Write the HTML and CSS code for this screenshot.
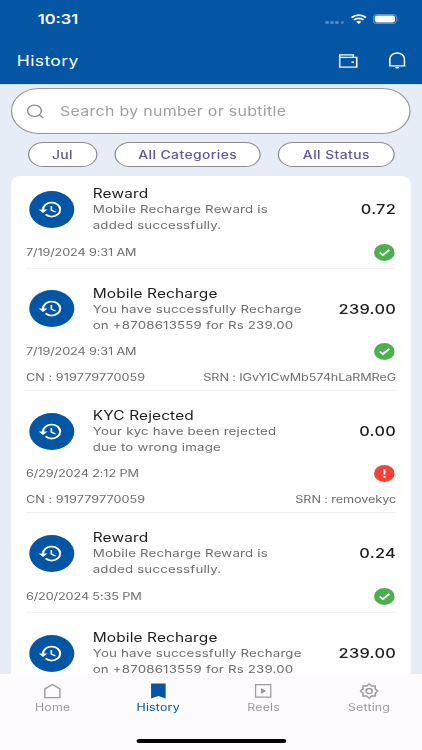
FILE: index.html
```html
<!DOCTYPE html>
<html lang="en">
<head>
<meta charset="utf-8">
<title>History</title>
<link rel="stylesheet" href="styles.css">
</head>
<body>
<svg width="0" height="0" class="defs">
  <symbol id="hist" viewBox="0 0 24 24"><path fill="#fff" d="M13 3a9 9 0 0 0-9 9H1l3.89 3.89.07.14L9 12H6c0-3.87 3.13-7 7-7s7 3.13 7 7-3.13 7-7 7c-1.93 0-3.68-.79-4.94-2.06l-1.42 1.42A8.954 8.954 0 0 0 13 21a9 9 0 0 0 0-18zm-1 5v5l4.28 2.54.72-1.21-3.5-2.08V8H12z"/></symbol>
  <symbol id="ok" viewBox="0 0 17 17"><circle cx="8.5" cy="8.5" r="8.5" fill="#4caf50"/><path d="M4.7 8.5l2.6 2.6 5.2-5.2" fill="none" stroke="#fff" stroke-width="1.7"/></symbol>
  <symbol id="bad" viewBox="0 0 17 17"><circle cx="8.5" cy="8.5" r="8.5" fill="#f44336"/><path d="M8.5 4.2v5.2M8.5 10.9v1.9" stroke="#fff" stroke-width="1.8"/></symbol>
</svg>
<div class="screen">
  <header>
    <div class="status">
      <span class="time">10:31</span>
      <span class="dots"><i></i><i></i><i></i><i></i></span>
      <svg class="wifi" width="13" height="10" viewBox="0 0 13 10"><g fill="none" stroke="#fff" stroke-width="1.7"><path d="M.6 3.6a8.4 8.4 0 0 1 11.8 0"/><path d="M2.6 5.9a5.5 5.5 0 0 1 7.8 0"/></g><path d="M6.5 10L4.4 7.8a3 3 0 0 1 4.2 0z" fill="#fff"/></svg>
      <svg class="battery" width="22" height="10" viewBox="0 0 22 10"><rect x=".4" y=".4" width="19" height="9.2" rx="3" fill="none" stroke="#fff" stroke-opacity=".45" stroke-width=".8"/><rect x="1.6" y="1.6" width="16.6" height="6.8" rx="1.8" fill="#fff"/><path d="M20.5 3.5q1.2 1.5 0 3z" fill="#fff" fill-opacity=".5"/></svg>
    </div>
    <div class="bar">
      <h1>History</h1>
      <svg class="wallet" width="16" height="14" viewBox="0 0 16 14" fill="none" stroke="#fff" stroke-width="1.3"><path d="M.8 3.4V.8H12v2.6"/><path d="M.8 3.4h14v9.8H.8z"/><path d="M10.5 8.2h2" stroke-width="1.6"/></svg>
      <svg class="bell" width="14" height="17" viewBox="0 0 14 17" fill="none" stroke="#fff" stroke-width="1.3"><path d="M0 13.8h14M1 13.8V7a6 6 0 0 1 12 0v6.8"/><path d="M5.2 15h3.6L7.8 16.4H6.2z" fill="#fff" stroke="none"/></svg>
    </div>
  </header>
  <div class="search">
    <svg width="14" height="15" viewBox="0 0 14 15" fill="none" stroke="#8c8c8f" stroke-width="1.2"><circle cx="6.3" cy="6.8" r="5.7"/><path d="M10.3 10.8l3.2 3.2"/></svg>
    <span>Search by number or subtitle</span>
  </div>
  <div class="chips">
    <span class="chip jul">Jul</span><span class="chip cat">All Categories</span><span class="chip stat">All Status</span>
  </div>
  <main class="card">
    <article>
      <div class="row"><span class="avatar"><svg width="21" height="21"><use href="#hist"/></svg></span>
        <div class="body"><h2>Reward</h2><p>Mobile Recharge Reward is<br>added successfully.</p></div><b>0.72</b></div>
      <div class="date"><span>7/19/2024 9:31 AM</span><svg width="17" height="17"><use href="#ok"/></svg></div>
    </article>
    <article>
      <div class="row"><span class="avatar"><svg width="21" height="21"><use href="#hist"/></svg></span>
        <div class="body"><h2>Mobile Recharge</h2><p>You have successfully Recharge<br>on +8708613559 for Rs 239.00</p></div><b>239.00</b></div>
      <div class="date"><span>7/19/2024 9:31 AM</span><svg width="17" height="17"><use href="#ok"/></svg></div>
      <div class="refs"><span>CN : 919779770059</span><span class="srn">SRN : IGvYICwMb574hLaRMReG</span></div>
    </article>
    <article>
      <div class="row"><span class="avatar"><svg width="21" height="21"><use href="#hist"/></svg></span>
        <div class="body"><h2>KYC Rejected</h2><p>Your kyc have been rejected<br>due to wrong image</p></div><b>0.00</b></div>
      <div class="date"><span>6/29/2024 2:12 PM</span><svg width="17" height="17"><use href="#bad"/></svg></div>
      <div class="refs"><span>CN : 919779770059</span><span class="srn">SRN : removekyc</span></div>
    </article>
    <article>
      <div class="row"><span class="avatar"><svg width="21" height="21"><use href="#hist"/></svg></span>
        <div class="body"><h2>Reward</h2><p>Mobile Recharge Reward is<br>added successfully.</p></div><b>0.24</b></div>
      <div class="date"><span>6/20/2024 5:35 PM</span><svg width="17" height="17"><use href="#ok"/></svg></div>
    </article>
    <article>
      <div class="row"><span class="avatar"><svg width="21" height="21"><use href="#hist"/></svg></span>
        <div class="body"><h2>Mobile Recharge</h2><p>You have successfully Recharge<br>on +8708613559 for Rs 239.00</p></div><b>239.00</b></div>
    </article>
  </main>
  <footer>
    <nav>
      <a><svg width="14" height="15" viewBox="0 0 14 15" fill="none" stroke="#9b9b9e" stroke-width="1.2"><path d="M.8 14.2V5.4L7 .9l6.2 4.5v8.8z"/></svg>Home</a>
      <a class="on"><svg width="14" height="15" viewBox="0 0 14 15"><path d="M1 0h12v15l-6-2.6L1 15z" fill="#0456a5"/></svg>History</a>
      <a><svg width="14" height="15" viewBox="0 0 14 15" fill="none" stroke="#9b9b9e" stroke-width="1.2"><path d="M.7 1.2h12.6v12.4H.7z"/><path d="M5.2 4.6v5.6l4.4-2.8z" fill="#9b9b9e" stroke="none"/></svg>Reels</a>
      <a><svg width="16" height="16" viewBox="0 0 16 16" fill="none" stroke="#9b9b9e" stroke-width="1.3"><path d="M8 .9l2 2.1h3v3l2.1 2-2.1 2v3h-3L8 15.1 6 13H3v-3L.9 8 3 6V3h3z"/><circle cx="8" cy="8" r="2.5"/></svg>Setting</a>
    </nav>
    <div class="home"></div>
  </footer>
</div>
</body>
</html>
```
FILE: styles.css
```css
* { box-sizing: border-box; margin: 0; padding: 0; }
html, body { width: 422px; height: 750px; overflow: hidden; background: #e6edf6; }
body { font-family: Inter, "Liberation Sans", sans-serif; }
.defs { position: absolute; }
.screen { width: 347px; height: 750px; transform: scaleX(1.2183); transform-origin: 0 0; display: flex; flex-direction: column; overflow: hidden; }
svg { flex: none; display: block; }
header { height: 85px; flex: none; background: #0456a5; color: #fff; border-bottom: 1px solid #cfe4fa; }
.status { height: 38px; display: flex; align-items: center; padding: 0 18.8px 0 31px; }
.time { font-size: 13.5px; font-weight: 600; flex: 1; }
.dots { display: flex; gap: 1.6px; margin: 7px 5.4px 0 0; }
.dots i { width: 2.6px; height: 2.6px; border-radius: 1px; background: #fff; opacity: .3; }
.battery { margin-left: 5.6px; }
.bar { height: 46px; display: flex; align-items: center; padding: 0 13.8px 1px 13.8px; }
h1 { flex: 1; font-size: 14.4px; font-weight: 400; letter-spacing: .3px; }
.bell { margin-left: 25px; }
.search { flex: none; height: 46px; margin: 3px 9.6px 0 9px; border: 1px solid #97979a; border-radius: 23px; background: #fff; display: flex; align-items: center; padding-left: 12px; color: #a0a0a3; font-size: 13.1px; letter-spacing: .25px; }
.search span { margin-left: 13.2px; }
.chips { flex: none; display: flex; gap: 14.3px; margin: 8px 0 9px 22.8px; }
.chip { height: 25px; border: 1px solid #8a8a8e; border-radius: 13px; background: #fff; color: #65559f; font-size: 11.4px; font-weight: 500; letter-spacing: .36px; line-height: 24.5px; text-align: center; }
.jul { width: 57px; }
.cat { width: 120px; }
.stat { width: 95.5px; }
.card { flex: 1; min-height: 0; overflow: hidden; margin: 0 9.6px 0 9px; background: #fff; border-radius: 8px 8px 0 0; padding: 0 12.3px; }
article { padding: 16px 0 6.3px; border-bottom: 1px solid #f2f2f5; }
article:first-child { padding-top: 9px; }
.row { display: flex; align-items: center; padding-left: 2.3px; }
.avatar { width: 37px; height: 37px; border-radius: 50%; background: #0456a5; display: flex; align-items: center; justify-content: center; flex: none; padding-right: 1px; }
.body { flex: 1; margin-left: 15.5px; white-space: nowrap; }
h2 { font-size: 12.7px; font-weight: 400; line-height: 16.5px; letter-spacing: .1px; color: #1d1d1f; padding-top: 1px; margin-bottom: -1px; }
p { font-size: 10.9px; line-height: 15.8px; letter-spacing: .16px; color: #6d6d70; padding-top: .9px; margin-bottom: -.4px; }
b { font-size: 13.4px; font-weight: 500; letter-spacing: .25px; color: #1d1d1f; }
.date { display: flex; height: 18px; align-items: center; justify-content: space-between; margin-top: 9.5px; margin-bottom: .3px; padding-right: 1.5px; }
.date, .refs { font-size: 10.4px; color: #6d6d70; letter-spacing: -.1px; }
.refs { display: flex; justify-content: space-between; line-height: 14px; margin-top: 9.9px; margin-bottom: -1.1px; letter-spacing: .06px; }
.srn { letter-spacing: -.08px; }
footer { flex: none; height: 76px; background: #fdfbfe; }
nav { display: flex; width: 346.2px; height: 43px; padding-top: 9px; }
nav a { flex: 1; display: flex; flex-direction: column; align-items: center; font-size: 10.2px; letter-spacing: .15px; line-height: 14px; color: #9b9b9e; }
nav svg { height: 16px; margin-bottom: 1px; }
nav .on { color: #0456a5; }
.home { width: 123.5px; height: 4.4px; border-radius: 3px; background: #000; margin: 22px 0 0 111.5px; }
```
